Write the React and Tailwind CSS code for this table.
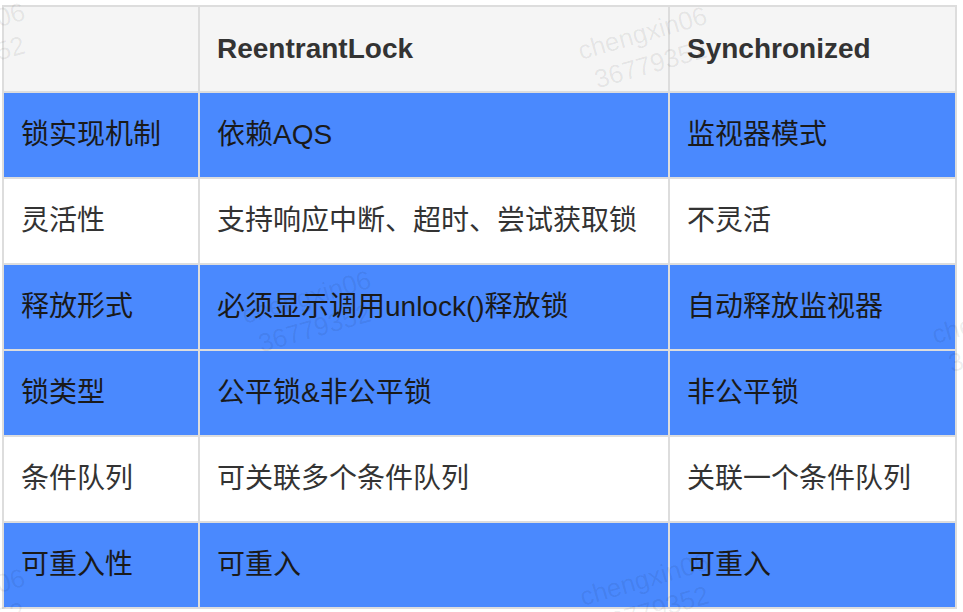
import React from "react";

const rows = [
  ["锁实现机制", "依赖AQS", "监视器模式", true],
  ["灵活性", "支持响应中断、超时、尝试获取锁", "不灵活", false],
  ["释放形式", "必须显示调用unlock()释放锁", "自动释放监视器", true],
  ["锁类型", "公平锁&非公平锁", "非公平锁", true],
  ["条件队列", "可关联多个条件队列", "关联一个条件队列", false],
  ["可重入性", "可重入", "可重入", true],
];

const marks = [
  [-108, 32],
  [574, 36],
  [238, 300],
  [928, 320],
  [576, 582],
  [-108, 598],
];

function Cell({ children, blue, header }) {
  return (
    <div
      className={
        "flex items-center pl-[17px] pb-[1px] h-[84px] " +
        (header
          ? "bg-[#f5f5f5] font-bold text-[#333333]"
          : blue
          ? "bg-[#4a89fe] text-[#1a1a1a]"
          : "bg-white text-[#333333]")
      }
    >
      {children}
    </div>
  );
}

export default function App() {
  return (
    <div
      className="relative w-[963px] h-[612px] bg-white overflow-hidden pt-[5px] pl-[2px] text-[28px] leading-none"
      style={{ fontFamily: '"Liberation Sans", "Noto Sans CJK SC", sans-serif' }}
    >
      <div className="grid grid-cols-[194px_468px_285px] gap-[2px] p-[2px] bg-[#dddddd] w-[955px]">
        <Cell header>{""}</Cell>
        <Cell header>ReentrantLock</Cell>
        <Cell header>Synchronized</Cell>
        {rows.map((r, i) => (
          <React.Fragment key={i}>
            <Cell blue={r[3]}>{r[0]}</Cell>
            <Cell blue={r[3]}>{r[1]}</Cell>
            <Cell blue={r[3]}>{r[2]}</Cell>
          </React.Fragment>
        ))}
      </div>
      {marks.map(([x, y], i) => (
        <div
          key={i}
          className="absolute pointer-events-none text-[26px] leading-[32px] text-black/[0.07] origin-top-left -rotate-[16deg] whitespace-nowrap"
          style={{ left: x, top: y }}
        >
          <div>chengxin06</div>
          <div className="pl-[8px]">36779352</div>
        </div>
      ))}
    </div>
  );
}
